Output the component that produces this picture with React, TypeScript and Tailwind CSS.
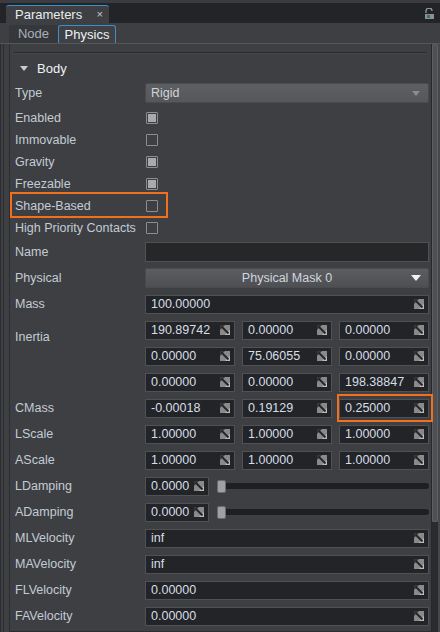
import React from 'react';

const FONT = { fontFamily: '"Liberation Sans", Arial, sans-serif' };

const ResizeIcon: React.FC = () => (
    <svg width="10" height="10" viewBox="0 0 10 10" className="flex-shrink-0">
        <rect x="0" y="0" width="10" height="10" fill="#8a8a8a" />
        <polygon points="0,0 5,0 0,5" fill="#3a3a3a" />
        <polygon points="10,10 5,10 10,5" fill="#bdbdbd" />
        <line x1="1.5" y1="1.5" x2="8.5" y2="8.5" stroke="#262626" strokeWidth="2" />
    </svg>
);

const NumField: React.FC<{ value: string; className?: string }> = ({ value, className }) => (
    <div className={`h-[19px] bg-[#232427] border border-[#505155] flex items-center justify-between pl-[5px] pr-[4px] text-[12.5px] text-[#d6dee6] ${className ?? ''}`}>
        <span className="leading-none">{value}</span>
        <ResizeIcon />
    </div>
);

const Checkbox: React.FC<{ checked?: boolean }> = ({ checked }) => (
    <div className="w-[12px] h-[12px] border border-[#8c8d90] rounded-[1px] flex items-center justify-center">
        {checked && <div className="w-[8px] h-[8px] bg-[#a8a9ab]" />}
    </div>
);

const Row: React.FC<{ label?: string; h?: string; children?: React.ReactNode; className?: string }> = ({ label, h = 'h-[26px]', children, className }) => (
    <div className={`relative flex items-center ${h} ${className ?? ''}`}>
        <div className="w-[135px] pl-[5px] pt-[1px] text-[12.5px] text-[#c3ccd4] whitespace-nowrap">{label}</div>
        <div className="flex-1 flex items-center pr-[1px]">{children}</div>
    </div>
);

const Triple: React.FC<{ values: string[]; highlightLast?: boolean }> = ({ values, highlightLast }) => (
    <div className="flex-1 grid grid-cols-3 gap-[7px]">
        {values.map((v, i) => (
            <div key={i} className="relative">
                <NumField value={v} />
                {highlightLast && i === 2 && (
                    <div className="absolute -left-[2px] -right-[4px] -top-[5px] -bottom-[4px] border-2 border-[#f0701e]" />
                )}
            </div>
        ))}
    </div>
);

const Slider: React.FC = () => (
    <div className="flex-1 flex items-center ml-[8px] relative h-[14px]">
        <div className="absolute left-0 right-0 h-[6px] bg-[#1e1f21] rounded-full" />
        <div className="relative w-[9px] h-[13px] bg-[#9fa0a2] rounded-[2px] border border-[#6a6b6d]" />
    </div>
);

const App: React.FC = () => {
    const checks: [string, boolean][] = [
        ['Enabled', true],
        ['Immovable', false],
        ['Gravity', true],
        ['Freezable', true],
        ['Shape-Based', false],
        ['High Priority Contacts', false],
    ];

    return (
        <div style={FONT} className="w-[440px] h-[632px] overflow-hidden bg-[#3e3f43] flex flex-col">
            <div className="h-[3px] bg-[#3b3c40]" />
            {/* window tab bar */}
            <div className="h-[20px] bg-[#232427] flex items-end pl-[6px] relative">
                <div className="h-[18px] w-[103px] bg-[#3e3f43] rounded-t-[3px] border-t border-[#3d8fc9] flex items-center justify-between pl-[9px] pr-[6px]">
                    <span className="text-[13px] text-[#e8ecf0] leading-none">Parameters</span>
                    <span className="text-[11px] text-[#c8c8c8] leading-none">×</span>
                </div>
                <svg width="11" height="12" viewBox="0 0 11 12" className="absolute right-[5px] top-[5px]">
                    <path d="M2 5 V3 a3 3 0 0 1 6 0" fill="none" stroke="#9a9a9a" strokeWidth="1.3" />
                    <rect x="1" y="6" width="9" height="5" fill="#8d8f90" />
                    <rect x="3" y="7" width="3" height="3" fill="#2f7a5a" />
                </svg>
            </div>
            {/* inner tabs */}
            <div className="h-[21px] flex items-end pl-[9px] border-b border-[#55565a]">
                <div className="h-[18px] w-[49px] bg-[#36373b] rounded-t-[3px] flex items-center justify-center text-[13px] text-[#a9b0b8]">Node</div>
                <div className="h-[18px] w-[58px] bg-[#404145] rounded-t-[3px] border-t border-x border-[#3d8fc9] flex items-center justify-center text-[13px] text-[#eef2f6]">Physics</div>
            </div>
            <div className="flex-1 flex min-h-0">
                {/* left gutter */}
                <div className="w-[9px] flex">
                    <div className="w-[1px] bg-[#2c2d30]" />
                    <div className="w-[2px]" />
                    <div className="w-[1px] bg-[#2c2d30]" />
                    <div className="flex-1" />
                </div>
                <div className="flex-1 border-l border-[#2c2d30] border-b flex flex-col pr-[1px]">
                    {/* Body header */}
                    <div className="h-[36px] flex flex-col">
                        <div className="mt-[8px] mx-[3px] h-[2px] border-t border-[#2a2b2e] border-b border-b-[#47484c]" />
                        <div className="flex items-center mt-[5px] pl-[10px] gap-[9px]">
                            <svg width="8" height="5" viewBox="0 0 8 5"><polygon points="0,0 8,0 4,5" fill="#c8ccd0" /></svg>
                            <span className="text-[13px] text-[#eef2f6]">Body</span>
                        </div>
                    </div>
                    <Row label="Type">
                        <div className="flex-1 h-[20px] rounded-[2px] border border-[#4a4b4f] bg-gradient-to-b from-[#5e5f63] to-[#56575b] flex items-center justify-between pl-[5px] pr-[8px]">
                            <span className="text-[12.5px] text-[#cfd4d8]">Rigid</span>
                            <svg width="8" height="5" viewBox="0 0 8 5"><polygon points="0,0 8,0 4,5" fill="#8c8d90" /></svg>
                        </div>
                    </Row>
                    <div className="mt-[1px]">
                        {checks.map(([l, c]) => (
                            <Row key={l} label={l} h="h-[22px]">
                                <div className="pl-[1px]"><Checkbox checked={c} /></div>
                                {l === 'Shape-Based' && (
                                    <div className="absolute left-0 top-[-3px] w-[158px] h-[26px] border-2 border-[#f0701e]" />
                                )}
                            </Row>
                        ))}
                    </div>
                    <Row label="Name">
                        <div className="flex-1 h-[20px] bg-[#262729] border border-[#505155]" />
                    </Row>
                    <Row label="Physical">
                        <div className="flex-1 h-[20px] rounded-[2px] border border-[#4a4b4f] bg-gradient-to-b from-[#5c5d61] to-[#4e4f53] flex items-center relative">
                            <span className="flex-1 text-center text-[12.5px] text-[#cfd6de]">Physical Mask 0</span>
                            <svg width="10" height="6" viewBox="0 0 10 6" className="absolute right-[7px]"><polygon points="0,0 10,0 5,6" fill="#f2f2f2" /></svg>
                        </div>
                    </Row>
                    <Row label="Mass">
                        <NumField value="100.00000" className="flex-1" />
                    </Row>
                    <div className="flex">
                        <div className="w-[135px] pl-[5px] pt-[11px] text-[12.5px] text-[#c3ccd4]">Inertia</div>
                        <div className="flex-1 flex flex-col pr-[1px]">
                            <div className="h-[26px] flex items-center"><Triple values={['190.89742', '0.00000', '0.00000']} /></div>
                            <div className="h-[26px] flex items-center"><Triple values={['0.00000', '75.06055', '0.00000']} /></div>
                            <div className="h-[26px] flex items-center"><Triple values={['0.00000', '0.00000', '198.38847']} /></div>
                        </div>
                    </div>
                    <Row label="CMass"><Triple values={['-0.00018', '0.19129', '0.25000']} highlightLast /></Row>
                    <Row label="LScale"><Triple values={['1.00000', '1.00000', '1.00000']} /></Row>
                    <Row label="AScale"><Triple values={['1.00000', '1.00000', '1.00000']} /></Row>
                    <Row label="LDamping">
                        <NumField value="0.0000" className="w-[64px]" />
                        <Slider />
                    </Row>
                    <Row label="ADamping">
                        <NumField value="0.0000" className="w-[64px]" />
                        <Slider />
                    </Row>
                    <Row label="MLVelocity"><NumField value="inf" className="flex-1" /></Row>
                    <Row label="MAVelocity"><NumField value="inf" className="flex-1" /></Row>
                    <Row label="FLVelocity"><NumField value="0.00000" className="flex-1" /></Row>
                    <Row label="FAVelocity"><NumField value="0.00000" className="flex-1" /></Row>
                </div>
                {/* scrollbar */}
                <div className="w-[9px] flex">
                    <div className="w-[1px] bg-[#27282b]" />
                    <div className="w-[6px] flex flex-col bg-[#2a2b2e]">
                        <div className="h-[478px] bg-[#4f5054] border border-[#5e5f63] rounded-[1px]" />
                    </div>
                    <div className="w-[2px] bg-[#46474b]" />
                </div>
            </div>
        </div>
    );
};

export default App;
